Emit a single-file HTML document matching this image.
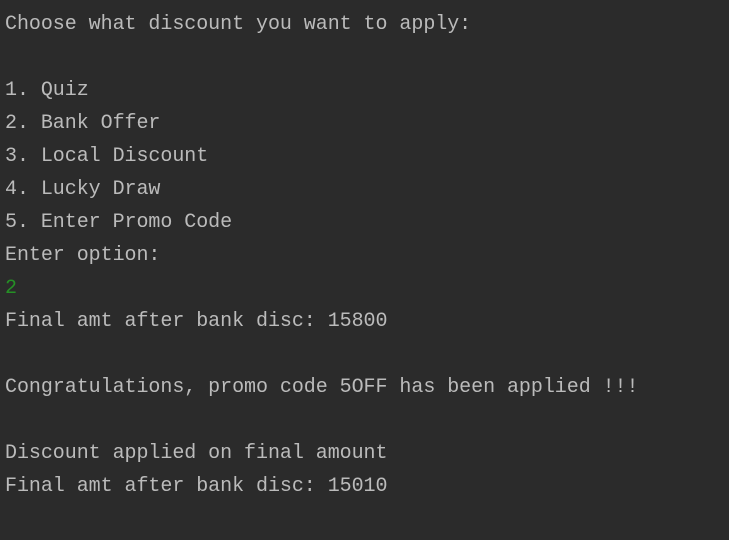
<!DOCTYPE html>
<html><head><style>
html,body{margin:0;padding:0;background:#2b2b2b;width:729px;height:540px;overflow:hidden}
pre{margin:0;padding:8px 0 0 5px;font-family:"Liberation Mono",monospace;font-size:20px;line-height:33px;color:#bbbbbb;letter-spacing:-0.05px}
.g{color:#259025}
</style></head><body><pre>Choose what discount you want to apply:

1. Quiz
2. Bank Offer
3. Local Discount
4. Lucky Draw
5. Enter Promo Code
Enter option:
<span class="g">2</span>
Final amt after bank disc: 15800

Congratulations, promo code 5OFF has been applied !!!

Discount applied on final amount
Final amt after bank disc: 15010
</pre></body></html>
